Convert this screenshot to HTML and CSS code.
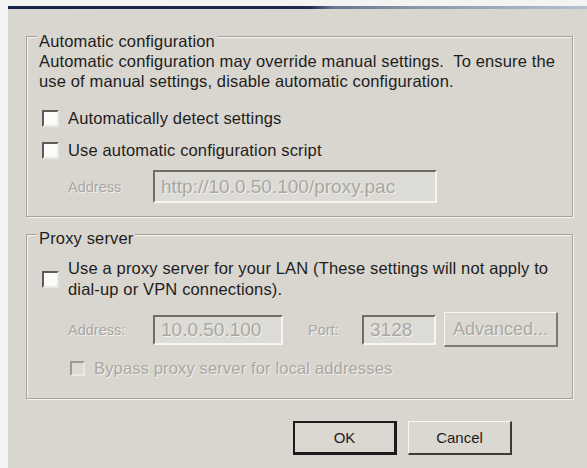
FILE: index.html
```
<!DOCTYPE html>
<html lang="en">
<head>
  <meta charset="UTF-8">
  <meta name="viewport" content="width=device-width, initial-scale=1.0">
  <title>Local Area Network (LAN) Settings</title>
  <link rel="stylesheet" href="styles.css">
</head>
<body>
  <div class="window">
    <div class="titlebar"></div>
    <div class="window-body">

      <div class="group group-auto">
        <div class="group-title">Automatic configuration</div>
        <p class="note">Automatic configuration may override manual settings.&nbsp; To ensure the<br>use of manual settings, disable automatic configuration.</p>
        <div class="check row-detect"><span class="box"></span>Automatically detect settings</div>
        <div class="check row-script"><span class="box"></span>Use automatic configuration script</div>
        <div class="field-row script-row">
          <span class="field-label disabled">Address</span>
          <span class="input input-script">http://10.0.50.100/proxy.pac</span>
        </div>
      </div>

      <div class="group group-proxy">
        <div class="group-title">Proxy server</div>
        <div class="check check-wrap"><span class="box"></span><span>Use a proxy server for your LAN (These settings will not apply to<br>dial-up or VPN connections).</span></div>
        <div class="field-row proxy-row">
          <span class="field-label disabled">Address:</span>
          <span class="input input-addr">10.0.50.100</span>
          <span class="field-label disabled port-label">Port:</span>
          <span class="input input-port">3128</span>
          <span class="btn btn-advanced disabled">Advanced...</span>
        </div>
        <div class="check check-bypass disabled"><span class="box box-disabled"></span>Bypass proxy server for local addresses</div>
      </div>

      <div class="actions">
        <span class="btn btn-default">OK</span>
        <span class="btn">Cancel</span>
      </div>

    </div>
  </div>
</body>
</html>
```

FILE: styles.css
```
body {
  margin: 0;
  padding: 6px 0 0 8px;
  background-color: #f3f3f1;
  font-family: "Liberation Sans", Arial, sans-serif;
  font-size: 16.5px;
  letter-spacing: 0.15px;
  color: #1e1d1c;
}

.window {
  background-color: #d9d6d0;
  min-height: calc(100vh - 6px);
}
.titlebar {
  height: 3px;
  background: linear-gradient(to right, #15224a 0%, #1d2b52 52%, #667591 56%, #8796ae 70%, #b6c0cf 100%);
}
.window-body {
  padding: 27px 14px 0 18px;
}

/* group boxes, etched look */
.group {
  border: 1px solid #a5a29b;
  box-shadow: inset 1px 1px 0 #f4f3ef, 1px 1px 0 #f4f3ef;
  padding: 0 12px 13px 12px;
}
.group-proxy {
  margin-top: 17px;
  padding-bottom: 20px;
}
.group-title {
  width: fit-content;
  margin: -4px 0 0 -2px;
  padding: 0 2px;
  line-height: 16px;
  background-color: #d9d6d0;
}
.group-proxy .group-title {
  margin-top: -5px;
}
.note {
  margin: 2px 0 0 0;
  line-height: 20px;
}

/* checkboxes */
.check {
  display: flex;
  align-items: center;
  gap: 9px;
  margin-left: 3px;
  height: 24px;
}
.row-detect {
  margin-top: 15px;
}
.row-script {
  margin-top: 8px;
}
.check-wrap {
  height: auto;
  margin-top: 12px;
  line-height: 21px;
}
.check-bypass {
  height: 20px;
  margin: 11px 0 0 31px;
  gap: 9px;
}
.box {
  flex: none;
  width: 13px;
  height: 13px;
  background-color: #fbfbfa;
  border-top: 2px solid #5e5c58;
  border-left: 2px solid #5e5c58;
  border-right: 2px solid #e9e8e4;
  border-bottom: 2px solid #e9e8e4;
}
.box-disabled {
  width: 11px;
  height: 11px;
  background-color: #dcdad5;
  border-top-color: #9c9a94;
  border-left-color: #9c9a94;
}

/* text fields */
.field-row {
  display: flex;
  align-items: center;
}
.script-row {
  margin-top: 8px;
  height: 33px;
}
.proxy-row {
  margin-top: 12px;
  height: 35px;
}
.field-label {
  width: 85px;
  margin-left: 29px;
  flex: none;
  font-size: 14.5px;
  letter-spacing: 0;
}
.port-label {
  width: 54px;
  margin-left: 25px;
}
.disabled {
  color: #aaa7a1;
  text-shadow: 1px 1px 0 #f1f0ec;
}
.input {
  display: flex;
  align-items: center;
  box-sizing: border-box;
  height: 33px;
  padding-left: 6px;
  background-color: #dddbd6;
  border-top: 2px solid #6f6d68;
  border-left: 2px solid #6f6d68;
  border-right: 2px solid #f6f5f2;
  border-bottom: 2px solid #f6f5f2;
  color: #aaa7a1;
  font-size: 19px;
  letter-spacing: 0;
  text-shadow: 1px 1px 0 #f1f0ec;
}
.input-script {
  width: 284px;
}
.input-addr {
  width: 130px;
  height: 30px;
}
.input-port {
  width: 74px;
  height: 30px;
}

/* buttons */
.btn {
  display: flex;
  align-items: center;
  justify-content: center;
  box-sizing: border-box;
  width: 104px;
  height: 34px;
  background-color: #dbd8d2;
  border-top: 1px solid #f7f6f3;
  border-left: 1px solid #f7f6f3;
  border-right: 2px solid #3c3b38;
  border-bottom: 2px solid #3c3b38;
  font-size: 15px;
  letter-spacing: 0;
}
.btn-advanced {
  width: 114px;
  height: 35px;
  margin-left: 8px;
  border-right-color: #7c7a75;
  border-bottom-color: #7c7a75;
  font-size: 18px;
}
.btn-default {
  border: 2px solid #1b1b1b;
  border-right-width: 3px;
  border-bottom-width: 3px;
}
.actions {
  display: flex;
  justify-content: flex-end;
  gap: 11px;
  margin-top: 22px;
  padding-right: 61px;
}
```
